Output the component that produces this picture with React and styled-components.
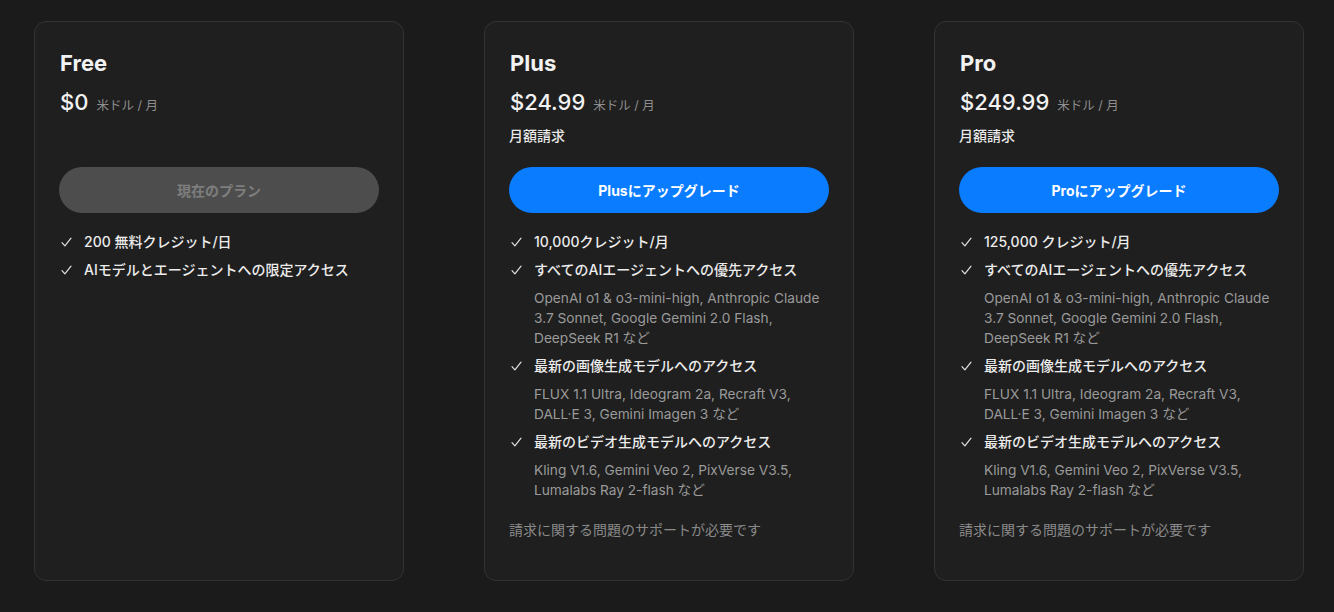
import React from "react";
import styled, { createGlobalStyle } from "styled-components";

const GlobalStyle = createGlobalStyle`
  html, body {
    margin: 0;
    padding: 0;
    background: #1b1b1b;
  }
  body {
    font-family: Inter, "Noto Sans CJK JP", "Noto Sans", sans-serif;
    color: #ececec;
    -webkit-font-smoothing: antialiased;
  }
`;

const plans = [
  {
    name: "Free",
    price: "$0",
    billing: "",
    button: "現在のプラン",
    current: true,
    features: [
      { text: "200 無料クレジット/日" },
      { text: "AIモデルとエージェントへの限定アクセス" },
    ],
  },
  {
    name: "Plus",
    price: "$24.99",
    billing: "月額請求",
    button: "Plusにアップグレード",
    support: true,
    features: [
      { text: "10,000クレジット/月" },
      {
        text: "すべてのAIエージェントへの優先アクセス",
        sub: "OpenAI o1 & o3-mini-high, Anthropic Claude 3.7 Sonnet, Google Gemini 2.0 Flash, DeepSeek R1 など",
      },
      {
        text: "最新の画像生成モデルへのアクセス",
        sub: "FLUX 1.1 Ultra, Ideogram 2a, Recraft V3, DALL·E 3, Gemini Imagen 3 など",
      },
      {
        text: "最新のビデオ生成モデルへのアクセス",
        sub: "Kling V1.6, Gemini Veo 2, PixVerse V3.5, Lumalabs Ray 2-flash など",
      },
    ],
  },
  {
    name: "Pro",
    price: "$249.99",
    billing: "月額請求",
    button: "Proにアップグレード",
    support: true,
    features: [
      { text: "125,000 クレジット/月" },
      {
        text: "すべてのAIエージェントへの優先アクセス",
        sub: "OpenAI o1 & o3-mini-high, Anthropic Claude 3.7 Sonnet, Google Gemini 2.0 Flash, DeepSeek R1 など",
      },
      {
        text: "最新の画像生成モデルへのアクセス",
        sub: "FLUX 1.1 Ultra, Ideogram 2a, Recraft V3, DALL·E 3, Gemini Imagen 3 など",
      },
      {
        text: "最新のビデオ生成モデルへのアクセス",
        sub: "Kling V1.6, Gemini Veo 2, PixVerse V3.5, Lumalabs Ray 2-flash など",
      },
    ],
  },
];

function CheckIcon() {
  return (
    <svg width="11" height="10" viewBox="0 0 11 10" fill="none">
      <path
        d="M1 5.6 L3.9 8.8 L10 1.2"
        stroke="#e2e2e2"
        strokeWidth="1.2"
        strokeLinecap="round"
        strokeLinejoin="round"
      />
    </svg>
  );
}

function PlanCard({ plan }) {
  return (
    <Card>
      <Title>{plan.name}</Title>
      <PriceRow>
        <Price>{plan.price}</Price>
        <Unit>米ドル / 月</Unit>
      </PriceRow>
      <Billing>{plan.billing}</Billing>
      <ActionButton $current={plan.current}>{plan.button}</ActionButton>
      <Features>
        {plan.features.map((f) => (
          <Feature key={f.text}>
            <FeatureMain>
              <Check>
                <CheckIcon />
              </Check>
              <span>{f.text}</span>
            </FeatureMain>
            {f.sub && <FeatureSub>{f.sub}</FeatureSub>}
          </Feature>
        ))}
      </Features>
      {plan.support && <Support>請求に関する問題のサポートが必要です</Support>}
    </Card>
  );
}

export default function App() {
  return (
    <>
      <GlobalStyle />
      <Grid>
        {plans.map((p) => (
          <PlanCard key={p.name} plan={p} />
        ))}
      </Grid>
    </>
  );
}

const Grid = styled.div`
  display: grid;
  grid-template-columns: repeat(3, 370px);
  column-gap: 80px;
  padding: 21px 0 0 34px;
`;

const Card = styled.div`
  display: flex;
  flex-direction: column;
  background: #1f1f1f;
  border: 1px solid #333333;
  border-radius: 12px;
  padding: 27px 24px 40px 24px;
`;

const Title = styled.div`
  padding-left: 1px;
  font-size: 22px;
  line-height: 28px;
  font-weight: 700;
  color: #f2f2f2;
`;

const PriceRow = styled.div`
  display: flex;
  align-items: baseline;
  gap: 8px;
  margin-top: 11px;
  padding-left: 1px;
  height: 28px;
`;

const Price = styled.span`
  font-size: 22px;
  line-height: 28px;
  font-weight: 500;
  color: #f2f2f2;
`;

const Unit = styled.span`
  font-size: 12.5px;
  color: #8e8e8e;
`;

const Billing = styled.div`
  margin-top: 10px;
  min-height: 20px;
  font-size: 14px;
  line-height: 20px;
  font-weight: 500;
  color: #e8e8e8;
`;

const ActionButton = styled.button`
  margin-top: 21px;
  width: 320px;
  height: 46px;
  border: none;
  border-radius: 23px;
  font-family: inherit;
  font-size: 14px;
  font-weight: 700;
  cursor: ${(p) => (p.$current ? "default" : "pointer")};
  background: ${(p) => (p.$current ? "#4d4d4d" : "#0a7cff")};
  color: ${(p) => (p.$current ? "#7e7e7e" : "#ffffff")};
`;

const Features = styled.ul`
  list-style: none;
  margin: 19px 0 0;
  padding: 0;
  display: flex;
  flex-direction: column;
  gap: 8px;
`;

const Feature = styled.li`
  display: flex;
  flex-direction: column;
`;

const FeatureMain = styled.div`
  display: flex;
  align-items: center;
  font-size: 14px;
  line-height: 20px;
  font-weight: 500;
  color: #ececec;
`;

const Check = styled.span`
  display: flex;
  align-items: center;
  width: 25px;
  flex-shrink: 0;
  padding-left: 2px;
  box-sizing: border-box;
`;

const FeatureSub = styled.div`
  margin-top: 8px;
  padding-left: 25px;
  font-size: 13.7px;
  line-height: 20px;
  color: #9a9a9a;
`;

const Support = styled.div`
  margin-top: 20px;
  font-size: 14px;
  line-height: 20px;
  color: #8a8a8a;
`;
